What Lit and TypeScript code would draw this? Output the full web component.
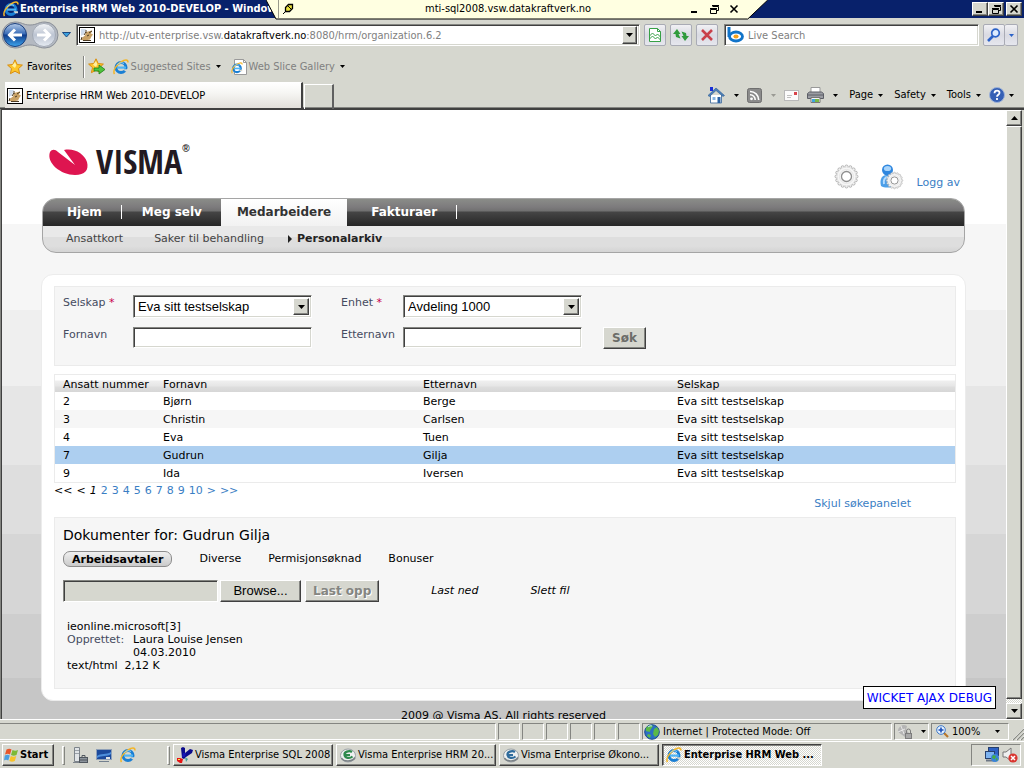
import { LitElement, html, css, svg } from "lit";
import { customElement, state } from "lit/decorators.js";
import { classMap } from "lit/directives/class-map.js";

/* ---------- icons ---------- */

const wrap = (w: number, h: number, body: unknown) =>
  html`<svg class="ico" width=${w} height=${h} viewBox="0 0 ${w} ${h}" aria-hidden="true">${body}</svg>`;

const ieBody = svg`
  <circle cx="8" cy="8.500" r="5" fill="none" stroke="#1a7fd4" stroke-width="3"/>
  <path d="M4 7.500h9v2.200H4z" fill="#4db4f5"/>
  <path d="M10.500 10.200h4.500v2h-3z" fill="#d6d7cf"/>
  <path d="M1.500 15C-.5 12 3 6 8 3c4-2.600 7-2.600 7 .4" fill="none" stroke="#f3b62a" stroke-width="1.500"/>
  <path d="M4 6c1.500-2 4.500-3 7-1.500" fill="none" stroke="#8fd6ff" stroke-width="1"/>`;
const ieIcon = wrap(16, 16, ieBody);
const iePage = wrap(16, 16, svg`
  <path d="M3.500.5h9l3 3v12h-12z" fill="#fff" stroke="#9a9a9a"/>
  <path d="M12.500.5v3h3" fill="none" stroke="#9a9a9a"/>
  <g transform="translate(0 3) scale(.75)">${ieBody}</g>`);
const pageIcon = wrap(16, 16, svg`
  <rect x=".5" y=".5" width="15" height="15" fill="#fff" stroke="#000"/>
  <path d="M2 2h5L5 7 2 9z" fill="#cfdcec"/>
  <path d="M2 13l2-3 2-1.500L7 5l6-1.500-1 3 2 1-1.500 2-1.500 3-5 1z" fill="#c9a266"/>
  <path d="M3 10l-1 3M5 8l2-3M7 6V3M13 4l-3 2M4 13.500h8M8 9l2-1" stroke="#4b3a22" stroke-width="1" fill="none"/>`);
const starBody = svg`<path d="M8 .8l2.200 4.700 5.200.6-3.900 3.500 1.100 5.100L8 12.200l-4.600 2.500 1.100-5.100L.6 6.100l5.200-.6z" fill="#fdc62b" stroke="#d98e10" stroke-width="1"/><path d="M8 3l1.300 3.300L8 9 5 6.800z" fill="#fff0a0"/>`;
const starIcon = wrap(16, 16, starBody);
const starAdd = wrap(18, 17, svg`${starBody}<path d="M6 10h5V7l6 4.500-6 4.500v-3H6z" fill="#4fc43c" stroke="#1d7d16" stroke-width=".8"/>`);
const backForward = html`<svg class="ico" width="58" height="28" viewBox="0 0 58 28" aria-hidden="true">
  <defs>
    <linearGradient id="bk" x1="0" y1="0" x2="0" y2="1"><stop offset="0" stop-color="#b5cbe8"/><stop offset=".45" stop-color="#3a6db8"/><stop offset=".5" stop-color="#0f3c8c"/><stop offset="1" stop-color="#3fa6ee"/></linearGradient>
    <linearGradient id="fw" x1="0" y1="0" x2="0" y2="1"><stop offset="0" stop-color="#f4f6f8"/><stop offset=".5" stop-color="#bcc4d2"/><stop offset="1" stop-color="#e6ebf2"/></linearGradient>
  </defs>
  <path d="M14 1c7 0 8 3 15 3s8-3 15-3a13 13 0 0 1 0 26c-7 0-8-3-15-3s-8 3-15 3A13 13 0 0 1 14 1z" fill="#b4b9c1" stroke="#8b9099"/>
  <circle cx="14" cy="14" r="11.500" fill="url(#bk)" stroke="#1b3f7d"/>
  <circle cx="43" cy="14" r="11.500" fill="url(#fw)" stroke="#a2a9b5"/>
  <path d="M21 14H9M14 8.500L8.500 14l5.500 5.500" fill="none" stroke="#fff" stroke-width="3"/>
  <path d="M36 14h12M43 8.500l5.500 5.500-5.500 5.500" fill="none" stroke="#fff" stroke-width="3"/>
</svg>`;
const blueDown = wrap(9, 6, svg`<path d="M.5.500h8L4.500 5z" fill="#3aa0dd" stroke="#1c4a84"/>`);
const caret = (color = "#000") => wrap(7, 4, svg`<path d="M0 0h7L3.500 4z" fill=${color}/>`);
const caretUp = wrap(7, 4, svg`<path d="M0 4h7L3.500 0z" fill="#000"/>`);
const smallCaret = (color = "#000") => wrap(5, 3, svg`<path d="M0 0h5L2.500 3z" fill=${color}/>`);
const compatIcon = wrap(14, 16, svg`<path d="M1.500 1.500h8l3 3v10h-11z" fill="#fff" stroke="#37a046"/><path d="M9.500 1.500v3h3M1.500 9l3-3 3 3 2-2 3 3M1.500 12l3-3 3 3 2-2 3 3" fill="none" stroke="#37a046"/>`);
const refreshIcon = wrap(16, 16, svg`<path d="M0 7l4-5 3.500 5H5.500l2 4.500L3 10 2.500 7zM16 9l-4 5-3.500-5h2L8.500 4.500 13 6l.5 3z" fill="#2f9b3c"/>`);
const stopIcon = wrap(14, 14, svg`<path d="M2 2l10 10M12 2L2 12" stroke="#c9414a" stroke-width="2.600"/>`);
const bingIcon = wrap(17, 16, svg`<path d="M2 0v10" stroke="#1174c9" stroke-width="3"/><ellipse cx="9" cy="9.500" rx="6.500" ry="4.500" fill="#fff" stroke="#1174c9" stroke-width="2.800"/><ellipse cx="9" cy="9.500" rx="2.600" ry="2" fill="#f6a11b"/>`);
const lensIcon = wrap(14, 14, svg`<path d="M1 13l5-5" stroke="#2c63c8" stroke-width="2.600"/><circle cx="8.500" cy="5" r="3.800" fill="#dcebff" stroke="#2c63c8" stroke-width="1.700"/>`);
const homeIcon = wrap(17, 17, svg`<path d="M2.500 8v8h11V8" fill="#fff" stroke="#5a7fa8"/><path d="M0 8.500L8 1l8.500 7.500-1.500 1L8 3.500 1.500 9.500z" fill="#4c7fb8" stroke="#2d5c94" stroke-width=".6"/><path d="M2 0h3v4H2z" fill="#1a2fd8"/><path d="M4.500 10h3v3h-3z" fill="#87b5e2"/><path d="M9.500 10h3v6h-3z" fill="#2b62a4"/>`);
const rssIcon = wrap(15, 15, svg`<rect x=".5" y=".5" width="14" height="14" rx="2" fill="#8b8b8b" stroke="#6f6f6f"/><circle cx="4.500" cy="10.800" r="1.400" fill="#fff"/><path d="M3 6.800a5 5 0 0 1 5.200 5.200M3 3.500a8.500 8.500 0 0 1 8.700 8.500" fill="none" stroke="#fff" stroke-width="1.600"/>`);
const mailIcon = wrap(15, 11, svg`<rect x=".5" y=".5" width="14" height="10" fill="#fbfbfb" stroke="#b9b9b9"/><path d="M10 2h3v3h-3z" fill="#d8434b"/><path d="M3 5.500h5M3 7.500h4" stroke="#c0c0c0"/>`);
const printIcon = wrap(17, 16, svg`<path d="M4 .5h9v5H4z" fill="#fff" stroke="#999"/><path d="M.5 6.500l2-1.500h12l2 1.500v5H.5z" fill="#9b9da3" stroke="#5c5e66"/><path d="M1 8h15" stroke="#5c5e66"/><path d="M4 10.500h9v5H4z" fill="#f4f4f4" stroke="#777"/><path d="M5 12h3v3H5z" fill="#3fa6de"/><path d="M8 12h4v3H8z" fill="#79b845"/>`);
const helpIcon = html`<svg class="ico" width="16" height="16" viewBox="0 0 16 16" aria-hidden="true"><circle cx="8" cy="8" r="7.500" fill="#3560b5" stroke="#9fb3d8"/><path d="M5.500 6.200C5.600 2.700 10.800 3 10.500 6 10.300 7.700 8 7.800 8 9.800M8 11v2" fill="none" stroke="#fff" stroke-width="1.800"/></svg>`;
const globeIcon = wrap(16, 16, svg`<circle cx="8" cy="8" r="7.300" fill="#2c6fc4" stroke="#1c4c8c"/><path d="M2 4c2-3 6-3.500 7-2L7 5 5.500 8 2 7zM10 5l3-2 2 4-1 4-3 2-2-3zM4 10l3 1-1 3-3-2z" fill="#5bb947"/><path d="M4 3c1-1 3-1.500 4-1" stroke="#c5e8ff" fill="none"/>`);
const shieldIcon = wrap(16, 16, svg`<path d="M1 8a6 6 0 0 1 9-6l-1 4 3 3-4 4z" fill="#b5b5b5"/><path d="M4 2l3 8M1 8l7-3" stroke="#e8e8e8"/><rect x="8.500" y="9.500" width="6" height="5" fill="#a8a8a8" stroke="#7d7d7d"/><path d="M9.500 9V7a2 2 0 0 1 4 0v2" fill="none" stroke="#7d7d7d"/>`);
const zoomIcon = wrap(13, 13, svg`<path d="M8 8l4 4" stroke="#b8762b" stroke-width="2.200"/><circle cx="5" cy="5" r="4.300" fill="#e4f1ff" stroke="#3c78c8"/><path d="M5 2.500v5M2.500 5h5" stroke="#1c4fb8" stroke-width="1.600"/>`);
const gripIcon = wrap(13, 13, svg`<path d="M1 13L13 1M5 13l8-8M9 13l4-4" stroke="#fff"/><path d="M2 13L13 2M6 13l7-7M10 13l3-3" stroke="#888a83" stroke-width="1.200"/>`);
const flagIcon = wrap(16, 16, svg`<path d="M2.500 2.500c2-1 3.500-1 5 0L6 7.500c-1.500-1-3-1-5 0z" fill="#e8562a"/><path d="M8.500 3c2 1 3.500 1 5.500 0l-1.500 5c-2 1-3.500 1-5.500 0z" fill="#7dba37"/><path d="M.8 8.500c2-1 3.500-1 5 0l-1.500 5c-1.500-1-3-1-4.300 0z" fill="#4a9fe0"/><path d="M6.800 9c2 1 3.500 1 5.500 0l-1.500 5c-2 1-3.500 1-5.500 0z" fill="#f8c32a"/>`);
const serverIcon = wrap(16, 16, svg`<path d="M2.500.5h5v14h-5z" fill="#dfe3e6" stroke="#7d848b"/><path d="M3 3.500h4M3 6.500h4" stroke="#9aa1a8"/><path d="M1 15.500h8" stroke="#7d848b"/><rect x="7.500" y="10.500" width="8" height="5" fill="#8c949c" stroke="#50575f"/><path d="M10 10.500v-2h3v2M8 13h7" stroke="#50575f" fill="none"/>`);
const desktopIcon = wrap(16, 13, svg`<rect x=".5" y=".5" width="15" height="10" fill="#1c4a9c" stroke="#8fa0b8"/><path d="M1 7c4-3 9-1 14-4v2c-4 3-9 1-14 4z" fill="#4d8fdd"/><path d="M3 12.500h10" stroke="#73808f"/><path d="M10 8h4v2h-4z" fill="#dfe3e8"/>`);
const sqlIcon = wrap(16, 16, svg`<path d="M4 1l2-1 2 1v5l5-4 3 1-1 3-6 4-2 2-2-1z" fill="#0b0b8c"/><path d="M6 6h3l-1 4H5z" fill="#1616b4"/><path d="M0 11h3l3 1-1 4H3L0 14z" fill="#e81313"/><path d="M1 12h2v1H1z" fill="#ffe14a"/><path d="M8 10l3 2-2 3z" fill="#4aa0a0"/>`);
const eIcon = (color: string) => wrap(16, 16, svg`<ellipse cx="8" cy="8.500" rx="7.500" ry="6.500" fill="#eef0f0" stroke="#9aa1a5"/><path d="M1.500 11c2 4 11 4 13.500-.5" stroke="#7b8286" stroke-width="1.600" fill="none"/><path d="M12 5C9 3 4 5 4.500 8s5 4 8 1.500M5 8h5" fill="none" stroke=${color} stroke-width="2.200"/>`);
const netIcon = wrap(16, 16, svg`<rect x="4.500" y=".5" width="10" height="8" fill="#2f62c4" stroke="#27406e"/><rect x="1.500" y="4.500" width="9" height="7" fill="#7db3f0" stroke="#27406e"/><path d="M2 13.500h8" stroke="#6c7684" stroke-width="2"/><circle cx="11" cy="11" r="4" fill="#3a83d8"/><path d="M9 8l3 1-1 3-3-1zM12 11l2 1-2 2z" fill="#47b03a"/>`);
const soundIcon = wrap(16, 16, svg`<path d="M1 5h3l5-4v13l-5-4H1z" fill="#f0f0f0" stroke="#777"/><circle cx="11" cy="11" r="4.600" fill="#d93630"/><path d="M9 9l4 4M13 9l-4 4" stroke="#fff" stroke-width="1.500"/>`);
const pinIcon = wrap(12, 12, svg`<path d="M1 11l3-3" stroke="#000"/><path d="M3.500 4.500l3-3h4v4l-3 3h-4z" fill="#e8e03c" stroke="#000" stroke-width="1.300"/><path d="M6 3l3 3" stroke="#000"/>`);
const minGlyph = wrap(8, 8, svg`<path d="M0 7h6" stroke="#000" stroke-width="2"/>`);
const restoreGlyph = wrap(9, 9, svg`<path d="M2.500 1.500h6v4h-2M.5 4.500h6v4h-6z" fill="none" stroke="#000"/><path d="M2 .5h7M0 3.500h7" stroke="#000"/>`);
const closeGlyph = wrap(8, 8, svg`<path d="M.5.500l7 7M7.500.500l-7 7" stroke="#000" stroke-width="1.600"/>`);

const teeth = (r: number, n: number) =>
  Array.from({ length: n }, (_, i) => {
    const a = (i * 2 * Math.PI) / n;
    return svg`<circle cx=${(r * Math.cos(a)).toFixed(2)} cy=${(r * Math.sin(a)).toFixed(2)} r="1.500" fill="#f4f4f4" stroke="#a4a4a4" stroke-width=".8"/>`;
  });
const gearBody = svg`${teeth(10, 16)}<circle r="9.500" fill="#f6f6f6" stroke="#dcdcdc" stroke-width=".7"/><circle r="7" fill="none" stroke="#e6e6e6"/><circle r="5" fill="#fff" stroke="#8f8f8f" stroke-width="1.300"/>`;
const gearIcon = wrap(25, 25, svg`<g transform="translate(12.500 12.500)">${gearBody}</g>`);
const userGear = wrap(25, 25, svg`
  <path d="M2 22c-2-8 2-11 6-11s8 4 7 11c-3 2-10 2-13 0z" fill="#4d9fe8"/>
  <path d="M5 20c-1-4 1-7 4-7" stroke="#b5dcff" stroke-width="2" fill="none"/>
  <circle cx="8.500" cy="6" r="5.500" fill="#2f87df"/><ellipse cx="8.500" cy="4.500" rx="3.600" ry="2.600" fill="#a9d4fa"/>
  <g transform="translate(15.500 16.500) scale(.72)">${gearBody}</g>`);

const vismaMark = html`<svg class="ico" width="39" height="30" viewBox="0 0 39 30" aria-hidden="true">
  <path d="M1 6C3 3 6 3 9 6l17 13L15 4c11-2 20 4 23 12 2 8-2 13-12 13C12 29-3 17 1 6z" fill="#de1550"/>
</svg>`;

/* ---------- data ---------- */

interface Employee { no: number; first: string; last: string; company: string; }
const company = "Eva sitt testselskap";
const employees: Employee[] = [
  { no: 2, first: "Bjørn", last: "Berge", company },
  { no: 3, first: "Christin", last: "Carlsen", company },
  { no: 4, first: "Eva", last: "Tuen", company },
  { no: 7, first: "Gudrun", last: "Gilja", company },
  { no: 9, first: "Ida", last: "Iversen", company },
];

/* Beveled edges and icon alignment used by every element below */
const shared = css`
  * { box-sizing: border-box; }
  .ico { display: block; flex: none; overflow: visible; }
  button { font: inherit; color: inherit; padding: 0; margin: 0; border: 0; background: none; border-radius: 0; }
  input, select { font: inherit; color: inherit; border-radius: 0; margin: 0; outline: none; }
  a { text-decoration: none; color: inherit; }
  .raised {
    background: #d6d7cf;
    border: 1px solid; border-color: #fff #404040 #404040 #fff;
    box-shadow: inset -1px -1px #848581;
  }
  .sunken { border: 1px solid; border-color: #848581 #fff #fff #848581; }
  .well {
    border: 1px solid; border-color: #848581 #fff #fff #848581;
    box-shadow: inset 1px 1px #404040, inset -1px -1px #d6d7cf;
  }
`;

/* ---------- browser window top ---------- */

@customElement("browser-chrome")
class BrowserChrome extends LitElement {
  static styles = [shared, css`
    :host { display: block; background: #d6d7cf; font: 11px/14px "DejaVu Sans Condensed", "DejaVu Sans", sans-serif; color: #000; position: relative; white-space: nowrap; }
    .title { height: 18px; background: #08216b; color: #fff; display: flex; align-items: center; gap: 1px; padding: 0 2px 0 3px; font-weight: bold; }
    .title .name { flex: 1; }
    .wbtn { width: 16px; height: 14px; display: flex; align-items: center; justify-content: center; }
    .wbtns { display: flex; }
    .wbtns .wbtn:last-child { margin-left: 2px; }
    .remote { position: absolute; top: 0; left: 26%; width: 49%; height: 20px; }
    .remote .shape { display: block; width: 100%; height: 20px; }
    .remote .inner { position: absolute; inset: 0 30px 0 12px; height: 18px; display: flex; align-items: center; gap: 11px; }
    .remote .pin { width: 18px; height: 18px; margin-right: auto; border-left: 1px solid #999a8c; display: flex; align-items: center; justify-content: center; }
    .remote .host { position: absolute; left: 0; right: 0; text-align: center; pointer-events: none; }
    .addr { height: 34px; display: flex; align-items: center; gap: 4px; padding: 0 6px 0 1px; }
    .addr .down { width: 9px; margin: 0 1px 0 -1px; }
    .box { height: 22px; background: #fff; display: flex; align-items: center; gap: 4px; padding: 0 2px; color: #808080; }
    .box.url { flex: 1; min-width: 0; }
    .box.search { flex: 0 1 255px; min-width: 0; margin-left: 2px; }
    .box input { flex: 1; min-width: 0; border: 0; background: none; padding: 1px 0 0; color: #808080; height: 18px; }
    .box input::placeholder { color: #808080; opacity: 1; }
    .box b { font-weight: normal; color: #000; }
    .urltext { flex: 1; padding-top: 2px; }
    .drop { width: 15px; height: 18px; display: flex; align-items: center; justify-content: center; }
    .tool { width: 22px; height: 22px; border: 1px solid #a9abb5; border-radius: 2px; background: linear-gradient(#f1f1f4, #d9dae2 50%, #e6e7ee); display: flex; align-items: center; justify-content: center; }
    .split { display: flex; }
    .split .tool + .tool { width: 13px; border-left: 0; }
    .favs { height: 28px; display: flex; align-items: center; padding: 1px 4px 0; gap: 3px; }
    .favs .link { display: flex; align-items: center; gap: 2px; color: #808080; }
    .favs .link .ico:last-child { margin-left: 3px; }
    .favs .link.dark { color: #000; gap: 4px; }
    .rule { width: 2px; height: 22px; border-left: 1px solid #848581; border-right: 1px solid #fff; margin-left: 8px; }
    .favs .gap { margin-left: 4px; }
    .favs .gap2 { margin-left: 7px; }
    .tabs { height: 29px; display: flex; align-items: flex-start; padding: 2px 10px 0 5px; border-bottom: 1px solid #404040; box-shadow: inset 0 -1px #848581; }
    .tab { width: 298px; height: 26px; display: flex; align-items: center; gap: 3px; padding: 1px 2px 0; background: linear-gradient(#fff, #f6f6f3 40%, #e2dfda); border-top: 1px solid #fff; border-right: 2px solid #404040; text-align: left; }
    .newtab { width: 30px; height: 25px; margin: 2px 0 0 1px; border: 1px solid #fff; border-right: 2px solid #606060; border-bottom: 0; }
    .cmds { margin-left: auto; height: 26px; display: flex; align-items: center; gap: 8px; }
    .cmd { display: flex; align-items: center; gap: 5px; }
    .cmd.word { margin-left: 3px; }
    .cmd.ic { gap: 9px; }
    .cmd.help { gap: 4px; }
  `];

  render() {
    return html`
      <header class="title">
        ${ieIcon}<span class="name">Enterprise HRM Web 2010-DEVELOP - Windows</span>
        <span class="wbtns">
          <button class="wbtn raised" aria-label="Minimize">${minGlyph}</button>
          <button class="wbtn raised" aria-label="Restore">${restoreGlyph}</button>
          <button class="wbtn raised" aria-label="Close">${closeGlyph}</button>
        </span>
      </header>
      <div class="remote">
        <svg class="shape" viewBox="0 0 502 20" preserveAspectRatio="none" aria-hidden="true"><path d="M0 0l10 19h472l20-19z" fill="#ffffe1"/><path d="M0 0l10 19h472l20-19" fill="none" stroke="#000"/></svg>
        <div class="inner">
          <button class="pin" aria-label="Pin">${pinIcon}</button>
          <span class="host">mti-sql2008.vsw.datakraftverk.no</span>
          <button aria-label="Minimize session">${minGlyph}</button>
          <button aria-label="Restore session">${restoreGlyph}</button>
          <button aria-label="Close session">${closeGlyph}</button>
        </div>
      </div>
      <div class="addr">
        ${backForward}
        <span class="down">${blueDown}</span>
        <div class="box well url">${pageIcon}<span class="urltext">http://utv-enterprise.vsw.<b>datakraftverk.no</b>:8080/hrm/organization.6.2</span><button class="drop raised" aria-label="Show addresses">${caret()}</button></div>
        <button class="tool" aria-label="Compatibility view">${compatIcon}</button>
        <button class="tool" aria-label="Refresh">${refreshIcon}</button>
        <button class="tool" aria-label="Stop">${stopIcon}</button>
        <div class="box well search">${bingIcon}<input aria-label="Search the web" placeholder="Live Search"></div>
        <div class="split"><button class="tool" aria-label="Search">${lensIcon}</button><button class="tool" aria-label="Search options">${smallCaret("#2c63c8")}</button></div>
      </div>
      <nav class="favs">
        <a class="link dark" href="#">${starIcon}Favorites</a>
        <span class="rule"></span>
        ${starAdd}
        <a class="link gap" href="#">${ieIcon}Suggested Sites ${smallCaret()}</a>
        <a class="link gap2" href="#">${iePage}Web Slice Gallery ${smallCaret()}</a>
      </nav>
      <div class="tabs">
        <button class="tab">${pageIcon}Enterprise HRM Web 2010-DEVELOP</button>
        <button class="newtab" aria-label="New tab"></button>
        <div class="cmds">
          <button class="cmd ic" aria-label="Home">${homeIcon}${smallCaret()}</button>
          <button class="cmd ic" aria-label="Feeds">${rssIcon}${smallCaret("#9a9a94")}</button>
          <button class="cmd ic" aria-label="Read mail">${mailIcon}</button>
          <button class="cmd ic" aria-label="Print">${printIcon}${smallCaret()}</button>
          <button class="cmd word">Page${smallCaret()}</button>
          <button class="cmd word">Safety${smallCaret()}</button>
          <button class="cmd word">Tools${smallCaret()}</button>
          <button class="cmd help" aria-label="Help">${helpIcon}${smallCaret()}</button>
        </div>
      </div>`;
  }
}

/* ---------- the HRM page ---------- */

@customElement("hrm-page")
class HrmPage extends LitElement {
  @state() selected = 7;

  static styles = [shared, css`
    :host {
      display: block; overflow: hidden; font: 11px/14px Verdana, "DejaVu Sans", sans-serif; color: #000; padding: 0 40px 0 39px; white-space: nowrap;
      background: linear-gradient(#fff 114px, #f6f6f6 114px 200px, #efefef 200px 276px, #e6e6e6 276px 355px, #dedede 355px 424px, #d6d6d6 424px 504px, #cecece 504px 568px, #c6c6c6 568px);
    }
    .top { height: 88px; display: flex; justify-content: space-between; padding: 34px 6px 0 8px; }
    .logo { display: flex; gap: 8px; color: #231a22; }
    .logo .mark { padding-top: 2px; }
    .logo strong { font: bold 34px/34px "Liberation Sans Narrow", "Open Sans Condensed", "Roboto Condensed", "Liberation Sans", sans-serif; }
    .logo sup { font: bold 10px/10px "Liberation Sans", sans-serif; margin-left: -8px; vertical-align: top; }
    .user { display: flex; align-items: flex-start; gap: 20px; padding-top: 20px; }
    .user a { margin: 12px 0 0 -7px; }
    a { color: #3a7ec4; }
    .nav { margin: 0 1px; border: 1px solid #a5a5a5; border-radius: 14px; overflow: hidden; background: linear-gradient(#e9e9e9 0 38px, #dedede 38px 47px, #d4d4d4); }
    .tabs { display: flex; height: 27px; background: linear-gradient(#8a8c88 0, #7d7b7d 8px, #707070 12px, #454545 13px, #262626 27px); }
    .tabs a { color: #fff; font: bold 12px/27px Verdana, "DejaVu Sans", sans-serif; text-align: center; height: 27px; padding: 0 19px 0 20px; }
    .tabs a.bar { background: linear-gradient(#fff, #fff) right 6px / 1px 14px no-repeat; }
    .tabs a.wide { padding: 0 20px 0 24px; }
    .tabs a.active { background: linear-gradient(#fff, #f2f2f2); color: #333; padding: 0 16px; }
    .sub { display: flex; height: 26px; padding: 0 23px; gap: 31px; align-items: center; }
    .sub a { color: #444; }
    .sub a.on { font-weight: bold; color: #222; display: flex; align-items: center; gap: 5px; margin-left: -7px; }
    .card { margin-top: 21px; background: #fff; border: 1px solid #ececec; border-radius: 12px; padding: 11px 9px 11px 12px; }
    .panel { background: #f6f6f6; border: 1px solid #ebebeb; padding: 8px; }
    form.panel { height: 80px; display: grid; grid-template-columns: 70px 179px 29px 62px 179px 21px auto; grid-template-rows: 23px 22px; row-gap: 9px; justify-content: start; align-items: start; color: #454b60; }
    .c1 { grid-column: 1; }
    .c2 { grid-column: 2; }
    .c4 { grid-column: 4; }
    .c5 { grid-column: 5; }
    .c7 { grid-column: 7; }
    .r2 { grid-row: 2; }
    label { padding-top: 1px; }
    i.req { color: #c8004b; font-style: normal; }
    .combo { position: relative; height: 23px; background: #fff; color: #000; }
    .combo select { appearance: none; width: 100%; height: 100%; border: 0; background: transparent; padding: 1px 20px 0 4px; font: 13px/18px "Liberation Sans", Arial, sans-serif; }
    .combo .arrow { position: absolute; right: 2px; top: 2px; bottom: 2px; width: 16px; display: flex; align-items: center; justify-content: center; pointer-events: none; }
    .text { width: 100%; height: 21px; background: #fff; padding: 0 4px; }
    .btn { height: 22px; padding: 0 8px; font-weight: bold; color: #6c6d69; font-size: 12px; }
    table { width: 100%; margin-top: 8px; border: 1px solid #ebebeb; border-collapse: separate; border-spacing: 0; table-layout: fixed; }
    th, td { height: 18px; padding: 2px 0 0 8px; text-align: left; font-weight: normal; line-height: 16px; }
    th { height: 17px; line-height: 15px; }
    thead tr { background: linear-gradient(#fff 5px, #efefef 6px, #e6e6e6 11px, #dedede 12px, #d6d6d6); }
    tbody tr:nth-child(even) { background: #f6f6f6; }
    tbody tr.sel { background: #adcff0; }
    .w1 { width: 100px; } .w2 { width: 260px; } .w3 { width: 254px; }
    .pager { display: flex; gap: 4px; line-height: 15px; }
    .pager em { color: #000; }
    .hide { text-align: right; line-height: 14px; padding: 0 45px 0 0; margin-top: -1px; }
    .docs { margin-top: 6px; height: 172px; }
    h2 { margin: 0; font: 14px/18px Verdana, "DejaVu Sans", sans-serif; }
    .kinds { display: flex; gap: 27px; height: 18px; margin-top: 6px; align-items: center; }
    .kinds .on { font-weight: bold; border: 1px solid #8c8c8c; border-radius: 7px; padding: 0 8px; height: 16px; line-height: 13px; background: linear-gradient(#f0f0f0, #cacaca); }
    .upload { display: flex; align-items: center; margin-top: 12px; gap: 2px; height: 22px; }
    .upload .path { width: 155px; height: 22px; background: #d6d7cf; padding: 0 4px; }
    .browse { width: 81px; height: 22px; font: 13px/18px "Liberation Sans", Arial, sans-serif; }
    .up { color: #848581; text-shadow: 1px 1px #fff; margin-left: 2px; padding: 0 7px; }
    .upload em { margin-left: 50px; }
    .file { display: grid; grid-template-columns: 66px auto; justify-content: start; padding: 18px 4px 0; line-height: 13px; margin: 0; }
    .file .full { grid-column: 1 / 3; }
    .file dt { color: #454b60; }
    .file dd { margin: 0; grid-column: 2; }
    footer { text-align: center; padding: 8px 0; }
  `];

  render() {
    const person = employees.find((e) => e.no === this.selected)!;
    return html`
      <div class="top">
        <div class="logo"><span class="mark">${vismaMark}</span><span><strong>VISMA</strong></span><sup>®</sup></div>
        <div class="user">${gearIcon}${userGear}<a href="#">Logg av</a></div>
      </div>
      <nav class="nav">
        <div class="tabs">
          <a class="bar wide" href="#">Hjem</a><a href="#">Meg selv</a><a class="active" href="#">Medarbeidere</a><a class="bar wide" href="#">Fakturaer</a>
        </div>
        <div class="sub">
          <a href="#">Ansattkort</a><a href="#">Saker til behandling</a>
          <a class="on" href="#">${wrap(4, 8, svg`<path d="M0 0l4 4-4 4z" fill="#222"/>`)}Personalarkiv</a>
        </div>
      </nav>
      <main class="card">
        <form class="panel" @submit=${(e: Event) => e.preventDefault()}>
          <label class="c1" for="selskap">Selskap <i class="req">*</i></label>
          <div class="combo well c2"><select id="selskap"><option>${company}</option></select><span class="arrow raised">${caret()}</span></div>
          <label class="c4" for="enhet">Enhet <i class="req">*</i></label>
          <div class="combo well c5"><select id="enhet"><option>Avdeling 1000</option></select><span class="arrow raised">${caret()}</span></div>
          <label class="c1 r2" for="fornavn">Fornavn</label>
          <input class="text well c2 r2" id="fornavn">
          <label class="c4 r2" for="etternavn">Etternavn</label>
          <input class="text well c5 r2" id="etternavn">
          <button class="btn raised c7 r2">Søk</button>
        </form>
        <table>
          <thead><tr><th class="w1">Ansatt nummer</th><th class="w2">Fornavn</th><th class="w3">Etternavn</th><th>Selskap</th></tr></thead>
          <tbody>
            ${employees.map((e) => html`<tr class=${classMap({ sel: e.no === this.selected })} @click=${() => (this.selected = e.no)}>
              <td>${e.no}</td><td>${e.first}</td><td>${e.last}</td><td>${e.company}</td></tr>`)}
          </tbody>
        </table>
        <div class="pager"><span>&lt;&lt;</span><span>&lt;</span><em>1</em>${[2, 3, 4, 5, 6, 7, 8, 9, 10].map((n) => html`<a href="#">${n}</a>`)}<a href="#">&gt;</a><a href="#">&gt;&gt;</a></div>
        <div class="hide"><a href="#">Skjul søkepanelet</a></div>
        <section class="panel docs">
          <h2>Dokumenter for: ${person.first} ${person.last}</h2>
          <div class="kinds"><button class="on">Arbeidsavtaler</button><button>Diverse</button><button>Permisjonsøknad</button><button>Bonuser</button></div>
          <div class="upload">
            <input class="path well" aria-label="File to upload">
            <button class="browse raised">Browse...</button>
            <button class="btn up raised" disabled>Last opp</button>
            <em>Last ned</em><em>Slett fil</em>
          </div>
          <dl class="file">
            <dd class="full">ieonline.microsoft[3]</dd>
            <dt>Opprettet:</dt><dd>Laura Louise Jensen</dd>
            <dd>04.03.2010</dd>
            <dd class="full">text/html&nbsp; 2,12 K</dd>
          </dl>
        </section>
      </main>
      <footer>2009 @ Visma AS. All rights reserved</footer>`;
  }
}

/* ---------- status bar and taskbar ---------- */

@customElement("desktop-bars")
class DesktopBars extends LitElement {
  static styles = [shared, css`
    :host { display: block; background: #d6d7cf; font: 11px/14px "DejaVu Sans Condensed", "DejaVu Sans", sans-serif; white-space: nowrap; }
    .status { height: 22px; padding: 3px 0 1px; display: flex; gap: 2px; border-top: 1px solid #fff; }
    .cell { width: 22px; display: flex; align-items: center; gap: 3px; padding: 0 2px; }
    .cell.main { flex: 1; border-left: 0; }
    .cell.zone { width: 250px; padding: 0 1px; }
    .cell.guard { width: 35px; }
    .cell.zoom { width: 78px; padding: 0 8px 0 4px; }
    .cell .ico:last-child { margin-left: auto; }
    .grip { width: 13px; align-self: end; }
    .task { height: 27px; border-top: 1px solid #fff; padding: 2px 3px 2px 2px; display: flex; align-items: center; gap: 3px; }
    .start { height: 22px; width: 52px; font-weight: bold; display: flex; align-items: center; padding: 0 1px; }
    .rule { width: 3px; height: 19px; border: 1px solid; border-color: #fff #848581 #848581 #fff; }
    .quick { display: flex; gap: 8px; padding: 0 3px 0 4px; align-items: center; flex: none; width: 96px; }
    .start + .rule { margin-left: 5px; }
    .win { flex: 0 1 160px; min-width: 0; height: 22px; display: flex; align-items: center; gap: 2px; padding: 0 0 0 3px; text-align: left; }
    .win.on { font-weight: bold; border: 1px solid; border-color: #404040 #fff #fff #404040; background: repeating-conic-gradient(#fff 0 25%, #d6d7cf 0 50%) 0 0 / 2px 2px; box-shadow: inset 1px 1px #848581; }
    .tray { margin-left: auto; width: 50px; height: 22px; display: flex; align-items: center; justify-content: flex-end; gap: 2px; padding: 0 2px; }
  `];

  render() {
    return html`
      <div class="status">
        <div class="cell sunken main"></div>
        ${[0, 1, 2, 3, 4, 5].map(() => html`<div class="cell sunken"></div>`)}
        <div class="cell sunken zone">${globeIcon}<span>Internet | Protected Mode: Off</span></div>
        <div class="cell sunken guard">${shieldIcon}${smallCaret()}</div>
        <div class="cell sunken zoom">${zoomIcon}<span>100%</span>${smallCaret()}</div>
        <div class="grip">${gripIcon}</div>
      </div>
      <div class="task">
        <button class="start raised">${flagIcon}Start</button>
        <span class="rule"></span>
        <div class="quick">${serverIcon}${desktopIcon}${ieIcon}</div>
        <span class="rule"></span>
        <button class="win raised">${sqlIcon}<span>Visma Enterprise SQL 2008</span></button>
        <button class="win raised">${eIcon("#2e8a4d")}<span>Visma Enterprise HRM 20...</span></button>
        <button class="win raised">${eIcon("#2f6c9c")}<span>Visma Enterprise Økono...</span></button>
        <button class="win on">${ieIcon}<span>Enterprise HRM Web ...</span></button>
        <div class="tray sunken">${netIcon}${soundIcon}</div>
      </div>`;
  }
}

@customElement("app-root")
class AppRoot extends LitElement {
  static styles = [shared, css`
    :host { display: flex; flex-direction: column; height: 100vh; overflow: hidden; background: #d6d7cf; }
    .view { flex: 1; min-height: 0; display: flex; position: relative; border-left: 1px solid #848581; box-shadow: inset 1px 1px #404040; padding: 1px 0 0 1px; }
    hrm-page { flex: 1; min-width: 0; }
    .scroll { width: 16px; margin-right: 2px; display: flex; flex-direction: column; background: repeating-conic-gradient(#fff 0 25%, #d6d7cf 0 50%) 0 0 / 2px 2px; }
    .scroll button { height: 16px; display: flex; align-items: center; justify-content: center; }
    .thumb { flex: 1; margin-bottom: 4px; }
    .debug { position: absolute; right: 28px; bottom: 10px; border: 1px solid #000; background: #fff; color: #00f; font: 12px/14px Verdana, "DejaVu Sans", sans-serif; padding: 4px 3px 3px; }
  `];

  render() {
    return html`
      <browser-chrome></browser-chrome>
      <div class="view">
        <hrm-page></hrm-page>
        <div class="scroll">
          <button class="raised" aria-label="Scroll up">${caretUp}</button>
          <div class="thumb raised"></div>
          <button class="raised" aria-label="Scroll down">${caret()}</button>
        </div>
        <a class="debug" href="#">WICKET AJAX DEBUG</a>
      </div>
      <desktop-bars></desktop-bars>`;
  }
}
